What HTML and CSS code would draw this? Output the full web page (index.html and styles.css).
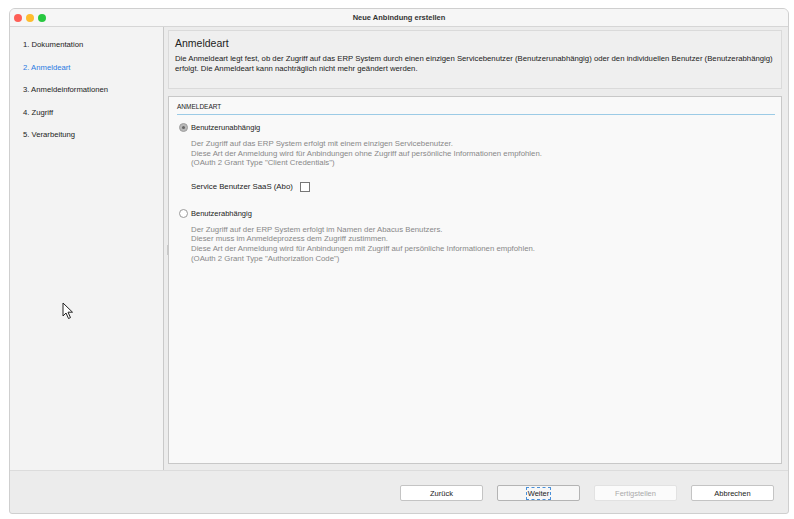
FILE: index.html
```html
<!DOCTYPE html>
<html lang="de">
<head>
    <meta charset="UTF-8">
    <title>Neue Anbindung erstellen</title>
    <link rel="stylesheet" href="styles.css">
</head>
<body>
    <div class="window">
        <div class="titlebar">
            <div class="lights">
                <span class="light red"></span>
                <span class="light yellow"></span>
                <span class="light green"></span>
            </div>
            <div class="title">Neue Anbindung erstellen</div>
        </div>
        <div class="main">
            <div class="sidebar">
                <div class="step">1. Dokumentation</div>
                <div class="step active">2. Anmeldeart</div>
                <div class="step">3. Anmeldeinformationen</div>
                <div class="step">4. Zugriff</div>
                <div class="step">5. Verarbeitung</div>
            </div>
            <div class="content">
                <div class="header">
                    <h2>Anmeldeart</h2>
                    <p>Die Anmeldeart legt fest, ob der Zugriff auf das ERP System durch einen einzigen Servicebenutzer (Benutzerunabhängig) oder den individuellen Benutzer (Benutzerabhängig) erfolgt. Die Anmeldeart kann nachträglich nicht mehr geändert werden.</p>
                </div>
                <div class="panel">
                    <div class="section-title">ANMELDEART</div>
                    <div class="option">
                        <span class="radio checked"></span>
                        <span class="option-label">Benutzerunabhängig</span>
                    </div>
                    <div class="desc">
                        Der Zugriff auf das ERP System erfolgt mit einem einzigen Servicebenutzer.<br>
                        Diese Art der Anmeldung wird für Anbindungen ohne Zugriff auf persönliche Informationen empfohlen.<br>
                        (OAuth 2 Grant Type "Client Credentials")
                    </div>
                    <div class="check-row">
                        <span>Service Benutzer SaaS (Abo)</span>
                        <span class="checkbox"></span>
                    </div>
                    <div class="option">
                        <span class="radio"></span>
                        <span class="option-label">Benutzerabhängig</span>
                    </div>
                    <div class="desc">
                        Der Zugriff auf der ERP System erfolgt im Namen der Abacus Benutzers.<br>
                        Dieser muss im Anmeldeprozess dem Zugriff zustimmen.<br>
                        Diese Art der Anmeldung wird für Anbindungen mit Zugriff auf persönliche Informationen empfohlen.<br>
                        (OAuth 2 Grant Type "Authorization Code")
                    </div>
                </div>
            </div>
            <span class="grip"></span>
        </div>
        <div class="footer">
            <button class="btn">Zurück</button>
            <button class="btn focus"><span>Weiter</span></button>
            <button class="btn disabled">Fertigstellen</button>
            <button class="btn">Abbrechen</button>
        </div>
    </div>
    <svg class="cursor" width="12" height="18" viewBox="0 0 12 18">
        <path d="M1 1 L1 14 L4 11 L6.5 16.5 L8.5 15.6 L6 10.2 L10.5 10.2 Z" fill="#fff" stroke="#222" stroke-width="1"/>
    </svg>
</body>
</html>
```
FILE: styles.css
```css
body {
    margin: 0;
    background: #fff;
    font-family: "Liberation Sans", Arial, sans-serif;
    color: #222;
}
.window {
    margin: 8px 0 0 9px;
    width: 780px;
    height: 506px;
    border: 1px solid #cfcfcf;
    border-radius: 6px 6px 3px 3px;
    box-sizing: border-box;
    display: flex;
    flex-direction: column;
    overflow: hidden;
    background: #ececec;
}
.titlebar {
    height: 17px;
    flex: none;
    background: #f6f6f6;
    border-bottom: 1px solid #d6d6d6;
    display: flex;
    align-items: center;
    position: relative;
}
.lights {
    display: flex;
    gap: 4px;
    padding-left: 4px;
}
.light {
    width: 8px;
    height: 8px;
    border-radius: 50%;
}
.red { background: #fe5f57; }
.yellow { background: #febc2e; }
.green { background: #28c840; }
.title {
    position: absolute;
    left: 0;
    right: 0;
    text-align: center;
    font-size: 7.5px;
    font-weight: bold;
    color: #333;
}
.main {
    flex: 1;
    display: flex;
    min-height: 0;
    position: relative;
    border-bottom: 1px solid #dcdcdc;
}
.sidebar {
    width: 154px;
    flex: none;
    background: #f3f3f3;
    border-right: 1px solid #c9c9c9;
    padding-top: 13px;
    box-sizing: border-box;
}
.step {
    font-size: 7.7px;
    height: 22.5px;
    padding-left: 13px;
    color: #222;
}
.step.active { color: #2a7ae2; }
.content {
    flex: 1;
    padding: 3px 6px 6px 4px;
    display: flex;
    flex-direction: column;
    gap: 7px;
}
.header {
    height: 59px;
    flex: none;
    box-sizing: border-box;
    background: #efefef;
    border: 1px solid #dadada;
    padding: 6px 4px 6px 6px;
}
.header h2 {
    margin: 0;
    font-size: 10.5px;
    font-weight: normal;
    color: #222;
}
.header p {
    margin: 5px 0 0;
    font-size: 7.75px;
    line-height: 10px;
    color: #222;
}
.panel {
    flex: 1;
    background: #f9f9f9;
    border: 1px solid #c8c8c8;
    padding: 6px 6px 0 8px;
}
.section-title {
    font-size: 6.5px;
    color: #222;
    padding-bottom: 4px;
    border-bottom: 1px solid #9ccbe6;
    margin-bottom: 8px;
}
.option {
    display: flex;
    align-items: center;
    gap: 3px;
    font-size: 7.5px;
    color: #222;
    margin-left: 2px;
}
.radio {
    width: 7px;
    height: 7px;
    border-radius: 50%;
    border: 1px solid #9a9a9a;
    background: #fff;
    position: relative;
}
.radio.checked {
    background: #b9b9b9;
    border-color: #a0a0a0;
}
.radio.checked::after {
    content: "";
    position: absolute;
    left: 2px;
    top: 2px;
    width: 3px;
    height: 3px;
    border-radius: 50%;
    background: #666;
}
.desc {
    font-size: 7.8px;
    line-height: 9.6px;
    color: #888;
    margin: 7px 0 0 14px;
}
.check-row {
    display: flex;
    align-items: center;
    gap: 7px;
    font-size: 7.8px;
    color: #222;
    margin: 14px 0 17px 14px;
}
.checkbox {
    width: 8px;
    height: 8px;
    border: 1px solid #777;
    background: #fff;
}
.grip {
    position: absolute;
    left: 157px;
    top: 218px;
    width: 1px;
    height: 10px;
    background: #c9c9c9;
}
.footer {
    height: 42px;
    flex: none;
    display: flex;
    align-items: center;
    justify-content: flex-end;
    gap: 14px;
    padding-right: 14px;
    padding-top: 2px;
    box-sizing: border-box;
}
.btn {
    width: 83px;
    height: 16px;
    padding: 0;
    background: #fff;
    border: 1px solid #c4c4c4;
    border-radius: 2px;
    font-family: "Liberation Sans", Arial, sans-serif;
    font-size: 7.5px;
    color: #222;
}
.btn.focus { background: #f7f7f7; border-color: #b4b4b4; }
.btn.focus span {
    border: 1px dashed #4a90d9;
    padding: 1px 1px;
}
.btn.disabled {
    color: #aaa;
    border-color: #e2e2e2;
    background: #fbfbfb;
}
.cursor {
    position: absolute;
    left: 62px;
    top: 302px;
}
```
